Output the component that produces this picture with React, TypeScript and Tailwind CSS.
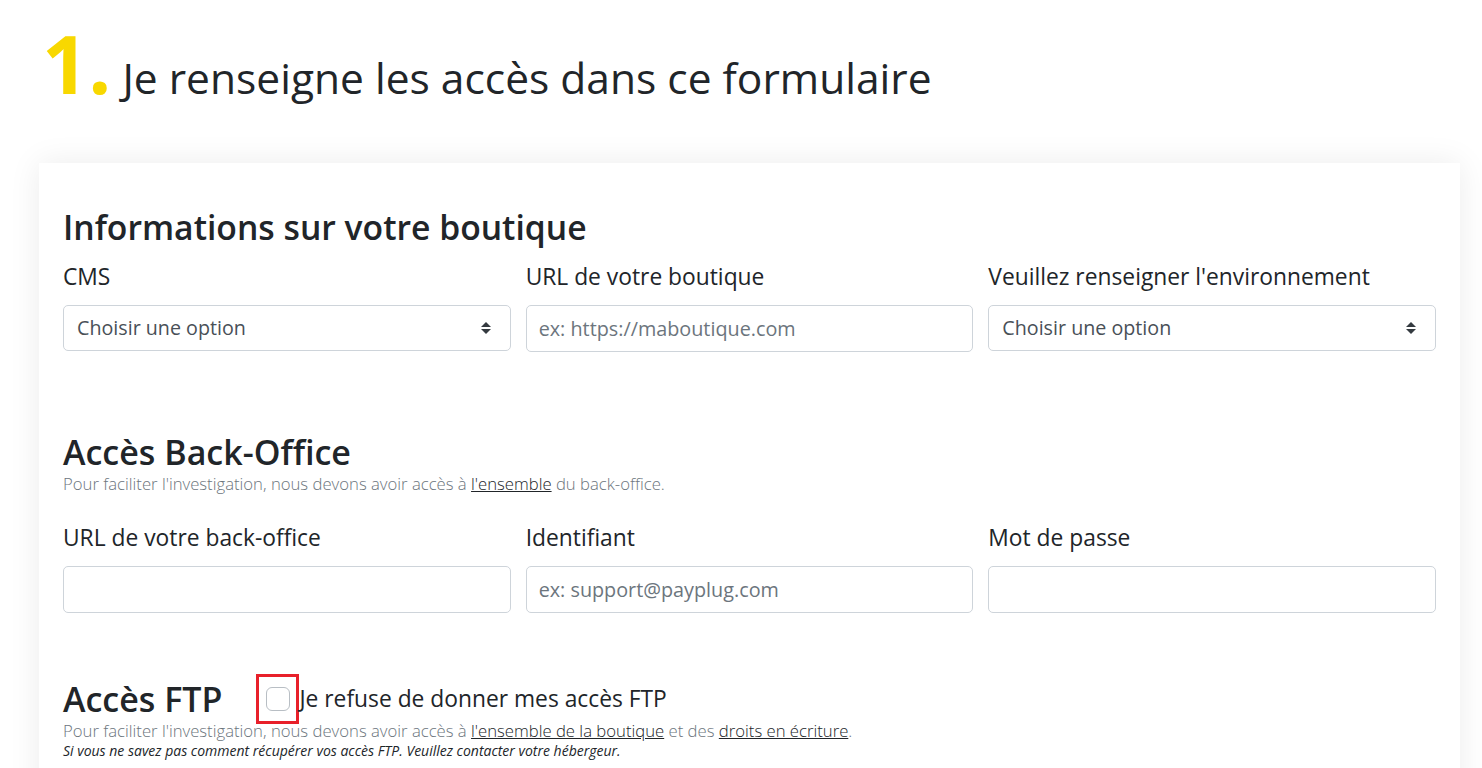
import React from "react";

const font = { fontFamily: '"Open Sans", "Noto Sans", sans-serif' };

function SelectArrows() {
  return (
    <svg width="12" height="16" viewBox="0 0 12 16" className="shrink-0">
      <path d="M6 2 L11 7 H1 Z" fill="#343a40" />
      <path d="M6 14 L11 9 H1 Z" fill="#343a40" />
    </svg>
  );
}

function Field({ label, kind, placeholder }: { label: string; kind: "select" | "input"; placeholder?: string }) {
  return (
    <div className="flex flex-col">
      <label className="text-[22.8px] leading-[30px] text-[#212529] mb-[13px]">{label}</label>
      {kind === "select" ? (
        <div className="h-[46px] border border-[#ced4da] rounded-[5px] flex items-center justify-between pl-[13px] pr-[18px] text-[19.7px] text-[#495057]">
          <span>Choisir une option</span>
          <SelectArrows />
        </div>
      ) : (
        <div className="h-[47px] border border-[#ced4da] rounded-[5px] flex items-center pl-[12px] text-[19.8px] text-[#6c757d]">
          <span>{placeholder ?? ""}</span>
        </div>
      )}
    </div>
  );
}

export default function App() {
  return (
    <div className="min-h-screen bg-white text-[#212529] overflow-hidden" style={font}>
      <div className="pl-[39px] pr-[22px]">
        <div className="flex items-baseline pt-[22px] pl-[3px] h-[163px]">
          <span className="text-[81px] font-bold text-[#f8d800] leading-none">1.</span>
          <span className="ml-[11px] text-[42.5px] leading-none text-[#212529]">Je renseigne les accès dans ce formulaire</span>
        </div>
        <div className="bg-white shadow-[0_0_30px_rgba(0,0,0,0.08)] px-[24px] pt-[42px] pb-[40px]">
          <h2 className="text-[33.7px] font-semibold leading-[44px] text-[#212529]">Informations sur votre boutique</h2>
          <div className="grid grid-cols-3 gap-[15px] mt-[13px]">
            <Field label="CMS" kind="select" />
            <Field label="URL de votre boutique" kind="input" placeholder="ex: https://maboutique.com" />
            <Field label="Veuillez renseigner l'environnement" kind="select" />
          </div>

          <h2 className="text-[34px] font-semibold leading-[40px] text-[#212529] mt-[80px]">Accès Back-Office</h2>
          <p className="text-[16.7px] leading-[20px] text-[#6c757d] font-light mt-[2px]">
            Pour faciliter l'investigation, nous devons avoir accès à{" "}
            <span className="underline text-[#212529]">l'ensemble</span> du back-office.
          </p>
          <div className="grid grid-cols-3 gap-[15px] mt-[29px]">
            <Field label="URL de votre back-office" kind="input" />
            <Field label="Identifiant" kind="input" placeholder="ex: support@payplug.com" />
            <Field label="Mot de passe" kind="input" />
          </div>

          <div className="flex items-center h-[40px] mt-[66px]">
            <h2 className="text-[34px] font-semibold leading-[40px] text-[#212529]">Accès FTP</h2>
            <div className="ml-[34px] -my-[5px] w-[43px] h-[50px] border-[3px] border-[#e8202a] flex items-center justify-center shrink-0">
              <div className="w-[24px] h-[24px] border border-[#b8bec4] rounded-[6px] bg-white" />
            </div>
            <span className="text-[22.8px] leading-[30px] text-[#212529]">Je refuse de donner mes accès FTP</span>
          </div>
          <p className="text-[16.7px] leading-[20px] text-[#6c757d] font-light mt-[2px]">
            Pour faciliter l'investigation, nous devons avoir accès à{" "}
            <span className="underline text-[#212529]">l'ensemble de la boutique</span> et des{" "}
            <span className="underline text-[#212529]">droits en écriture</span>.
          </p>
          <p className="text-[14px] italic leading-[20px] text-[#212529] mt-[0px]">
            Si vous ne savez pas comment récupérer vos accès FTP. Veuillez contacter votre hébergeur.
          </p>
        </div>
      </div>
    </div>
  );
}
